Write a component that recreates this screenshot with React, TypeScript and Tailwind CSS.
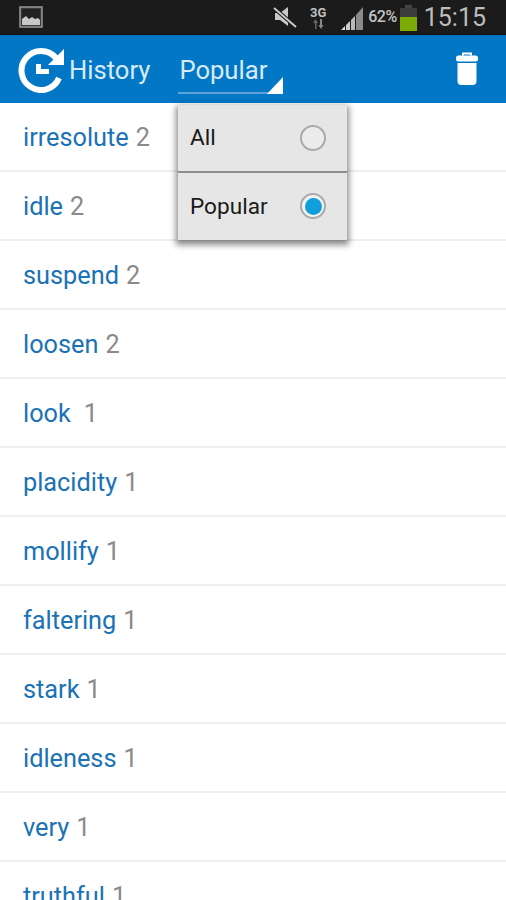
const rows: [string, number, string?][] = [
  ["irresolute", 2], ["idle", 2], ["suspend", 2], ["loosen", 2], ["look", 1, "ml-[13px]"], ["placidity", 1],
  ["mollify", 1], ["faltering", 1], ["stark", 1], ["idleness", 1], ["very", 1], ["truthful", 1],
];

function StatusBar() {
  return (
    <div className="h-[35px] bg-[#1b1b1b] border-b border-[#111] flex items-center relative shrink-0">
      <svg className="ml-[19px]" width="24" height="22" viewBox="0 0 24 22">
        <rect x="1" y="1" width="22" height="20" fill="#3a3a3a" stroke="#999" strokeWidth="1.5" />
        <rect x="3" y="3" width="18" height="16" fill="#222" />
        <path d="M3 19V13L7 10L10 13L13 11L16 13L19 12L21 14V19Z" fill="#c8c8c8" />
      </svg>
      <div className="ml-auto flex items-center h-full">
        <svg width="26" height="24" viewBox="0 0 26 24" className="mr-[10px]">
          <path d="M3 8H8L16 2V21L8 15H3Z" fill="#c9c9c9" />
          <path d="M2 3L24 22" stroke="#1b1b1b" strokeWidth="4" />
          <path d="M2 3L24 22" stroke="#c9c9c9" strokeWidth="2" />
        </svg>
        <div className="w-[20px] flex flex-col items-center mr-[12px] font-['Roboto',sans-serif] font-bold text-[#c0c0c0]">
          <span className="text-[13px] leading-[13px]">3G</span>
          <svg width="14" height="10" viewBox="0 0 14 10">
            <path d="M4 10V4H2L4.500 0L7 4H5.500V10Z" fill="#666" />
            <path d="M9 0V6H7.500L10 10L12.500 6H11V0Z" fill="#888" />
          </svg>
        </div>
        <svg width="24" height="26" viewBox="0 0 24 26" className="mt-[2px]">
          <path d="M1 25L5 21V25Z" fill="#ddd" />
          <path d="M6 20L10 16V25H6Z" fill="#ccc" />
          <path d="M11 15L15 11V25H11Z" fill="#bbb" />
          <path d="M16 10L23 2V25H16Z" fill="#8a8a8a" />
        </svg>
        <span className="ml-[4px] font-['Roboto',sans-serif] font-medium text-[16px] tracking-[-0.5px] text-[#c4c4c4]">62%</span>
        <svg width="19" height="26" viewBox="0 0 19 26" className="ml-[2px] mt-[2px]">
          <rect x="6" y="0" width="7" height="3" fill="#444" />
          <rect x="1" y="3" width="17" height="9" fill="#3c3c3c" />
          <rect x="1" y="12" width="17" height="14" fill="#7cab05" />
        </svg>
        <span className="ml-[6px] mr-[20px] mt-[2px] font-['Roboto',sans-serif] text-[25px] text-[#bdbdbd]">15:15</span>
      </div>
    </div>
  );
}

function Header() {
  return (
    <div className="h-[68px] bg-[#0277c5] flex items-center shrink-0 font-['Roboto',sans-serif] text-[25.6px] text-[#d8eaf6]">
      <svg width="48" height="46" viewBox="0 0 48 46" className="ml-[17px] mt-[1px]">
        <path d="M42 31A19.500 19.500 0 1 1 39 11" fill="none" stroke="#fff" strokeWidth="6" />
        <path d="M47 2V18H31Z" fill="#fff" />
        <path d="M19 17H24V22H32V27H19Z" fill="#fff" />
      </svg>
      <span className="ml-[4px] mt-[3px]">History</span>
      <div className="relative ml-[28px] w-[105px] h-[46px] flex items-center border-b-2 border-[#5fa3d8] mt-[4px]">
        <span className="pl-px">Popular</span>
        <svg width="16" height="17" viewBox="0 0 16 17" className="absolute right-0 bottom-[-2px]">
          <path d="M16 0V17H0Z" fill="#fff" />
        </svg>
      </div>
      <svg width="24" height="34" viewBox="0 0 24 34" className="ml-auto mr-[27px]">
        <path d="M8 3.500V1.500H16V3.500" fill="none" stroke="#fff" strokeWidth="2" />
        <rect x="1" y="3.500" width="22" height="6" rx="2.500" fill="#fff" />
        <path d="M2.500 11H21.500V29Q21.500 33 17.500 33H6.500Q2.500 33 2.500 29Z" fill="#fff" />
      </svg>
    </div>
  );
}

function Menu() {
  const item = "h-[66px] flex items-center justify-between pl-3 pr-[21px]";
  return (
    <div className="absolute left-[178px] top-[105px] w-[169px] h-[135px] bg-[#e6e6e6] shadow-[0_3px_6px_2px_rgba(0,0,0,0.45)] font-['Roboto',sans-serif] text-[22.6px] text-[#1a1a1a]">
      <div className={item}>
        <span>All</span>
        <div className="w-[26px] h-[26px] rounded-full border-2 border-[#a9a9a9] bg-[#ececec]" />
      </div>
      <div className="h-[2px] bg-[#8d8d8d]" />
      <div className={item}>
        <span className="mt-[2px]">Popular</span>
        <div className="w-[26px] h-[26px] rounded-full border-2 border-[#a9a9a9] bg-[#f3f3f3] flex items-center justify-center">
          <div className="w-[17px] h-[17px] rounded-full bg-[#109fdb]" />
        </div>
      </div>
    </div>
  );
}

export default function App() {
  return (
    <div className="relative w-[506px] h-[900px] overflow-hidden bg-white flex flex-col">
      <StatusBar />
      <Header />
      <div className="font-['Roboto',sans-serif] text-[25.3px]">
        {rows.map(([word, count, gap]) => (
          <div key={word} className="h-[69px] border-b-2 border-[#eeeeee] pl-[23px] pt-[2px] flex items-center">
            <span className="text-[#1b72b5]">{word}</span>
            <span className={`${gap ?? "ml-[7px]"} text-[#8a8a8a]`}>{count}</span>
          </div>
        ))}
      </div>
      <Menu />
    </div>
  );
}
